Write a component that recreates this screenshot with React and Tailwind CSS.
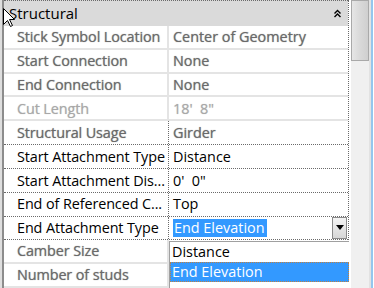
import React from 'react';

const FONT = "font-['Segoe_UI','Open_Sans','Noto_Sans',sans-serif]";

const rows = [
  { label: 'Stick Symbol Location', value: 'Center of Geometry', kind: 'ro', line: 'light' },
  { label: 'Start Connection', value: 'None', kind: 'ro', line: 'light' },
  { label: 'End Connection', value: 'None', kind: 'ro', line: 'light' },
  { label: 'Cut Length', value: '18\'  8"', kind: 'dim', line: 'light' },
  { label: 'Structural Usage', value: 'Girder', kind: 'ro', line: 'dark' },
  { label: 'Start Attachment Type', value: 'Distance', kind: 'rw', line: 'dark' },
  { label: 'Start Attachment Dis...', value: '0\'  0"', kind: 'rw', line: 'dark' },
  { label: 'End of Referenced C...', value: 'Top', kind: 'rw', line: 'dark' },
  { label: 'End Attachment Type', value: 'End Elevation', kind: 'combo', line: 'dark' },
  { label: 'Camber Size', value: '', kind: 'ro', line: 'light' },
  { label: 'Number of studs', value: '', kind: 'ro', line: 'light' },
];

const textClass = (kind) => {
  if (kind === 'ro') return 'text-[#6a6a6a] [text-shadow:0_0_1px_#909090]';
  if (kind === 'dim') return 'text-[#a8a8a8] [text-shadow:0_0_1px_#c4c4c4]';
  return 'text-black';
};

const Row = ({ label, value, kind, line }) => {
  const lineClass = line === 'dark'
    ? 'border-b border-dotted border-[#6a6a6a]'
    : 'border-b-2 border-[#e4e4e4]';
  const colClass = line === 'dark' || (kind !== 'ro' && kind !== 'dim')
    ? 'border-r border-dotted border-[#6a6a6a]'
    : 'border-r-2 border-[#e4e4e4]';
  return (
    <div className={`flex h-[24px] ${lineClass}`}>
      <div className={`w-[165px] pl-[13px] flex items-center whitespace-nowrap overflow-hidden tracking-[-0.1px] ${colClass} ${textClass(kind)}`}>
        {label}
      </div>
      <div className={`flex-1 pl-[4px] flex items-center whitespace-nowrap ${textClass(kind)}`}>
        {kind === 'combo' ? (
          <div className="flex-1 flex items-center justify-between pr-[1px]">
            <span className="bg-[#3399ff] text-white leading-[18px] pl-[1px] pr-[2px]">{value}</span>
            <div className="w-[15px] h-[22px] border border-[#8a8a8a] bg-gradient-to-b from-[#f4f4f4] to-[#d6d6d6] flex items-center justify-center">
              <svg width="8" height="5" viewBox="0 0 8 5"><path d="M0 0h8L4 5z" fill="#000" /></svg>
            </div>
          </div>
        ) : (
          <span className="whitespace-pre">{value}</span>
        )}
      </div>
    </div>
  );
};

export default function App() {
  return (
    <div className={`relative w-[374px] h-[288px] overflow-hidden bg-white flex text-[14.4px] ${FONT}`}>
      <div className="w-[2px] bg-[#dedede]" />
      <div className="w-[2px] bg-[#8c8c8c]" />
      <div className="w-[345px] flex flex-col border-r border-dotted border-[#6a6a6a]">
        <div className="h-[26px] shrink-0 bg-[#dadada] border-t border-dotted border-[#6a6a6a] flex items-center justify-between pl-[5px] pr-[7px] text-black text-[15px]">
          <span>Structural</span>
          <svg width="7" height="9" viewBox="0 0 7 9">
            <path d="M0.5 4.5L3.5 1.5L6.5 4.5M0.5 8L3.5 5L6.5 8" fill="none" stroke="#000" strokeWidth="1.4" />
          </svg>
        </div>
        {rows.map((r) => (
          <Row key={r.label} {...r} />
        ))}
      </div>
      <div className="flex-1 flex bg-white">
        <div className="w-[2px]" />
        <div className="w-[18px] bg-[#f0f0f0] flex flex-col">
          <div className="h-[61px] border border-[#a9a9a9] bg-gradient-to-r from-[#e6e6e6] via-[#d9d9d9] to-[#cfcfcf]" />
        </div>
        <div className="w-[2px] bg-[#e2e2e2]" />
        <div className="w-[2px] bg-[#94c6ee]" />
      </div>

      {/* dropdown list */}
      <div className="absolute left-[169px] top-[241px] w-[180px] h-[47px] bg-white border-t border-l border-[#a0a0a0] text-black">
        <div className="h-[20px] flex items-center pl-[2px]">Distance</div>
        <div className="h-[20px] flex items-center pl-[1px] bg-[#3399ff] text-white border border-dotted border-[#c08040]">End Elevation</div>
      </div>

      {/* mouse cursor */}
      <svg className="absolute left-[3px] top-[8px]" width="13" height="20" viewBox="0 0 13 20">
        <path d="M0.5 0.5V16.5L4.5 12.5L7.5 18.5L9.5 17.5L6.5 11.5H11.5Z" fill="#fff" stroke="#000" strokeWidth="1" />
      </svg>
    </div>
  );
}
